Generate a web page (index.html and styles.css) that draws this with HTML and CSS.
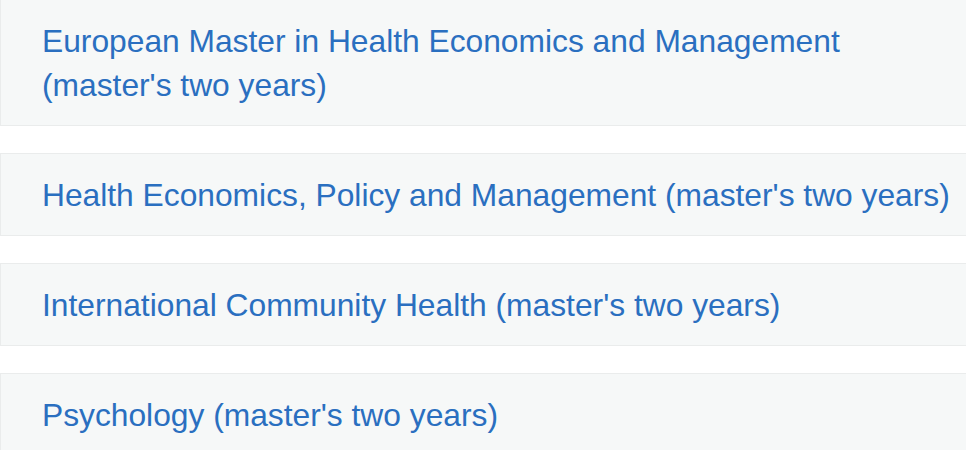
FILE: index.html
```html
<!DOCTYPE html>
<html lang="en">
<head>
<meta charset="utf-8">
<title>Programmes</title>
<link rel="stylesheet" href="styles.css">
</head>
<body>
<ul class="programme-list">
  <li class="programme-card"><a class="programme-link" href="#">European Master in Health Economics and Management (master's two years)</a></li>
  <li class="programme-card"><a class="programme-link" href="#">Health Economics, Policy and Management (master's two years)</a></li>
  <li class="programme-card"><a class="programme-link" href="#">International Community Health (master's two years)</a></li>
  <li class="programme-card"><a class="programme-link" href="#">Psychology (master's two years)</a></li>
</ul>
</body>
</html>
```
FILE: styles.css
```css
html, body {
  margin: 0;
  padding: 0;
  background: #ffffff;
  overflow: hidden;
}
.programme-list {
  list-style: none;
  margin: -1px 0 0 0;
  padding: 0;
  display: flex;
  flex-direction: column;
  gap: 27px;
}
.programme-card {
  background: #f6f8f8;
  border: 1px solid #eaecec;
  border-right: 0;
  padding: 19px 8px 18px 41px;
  font-family: "Liberation Sans", Arial, sans-serif;
  font-size: 31.75px;
  line-height: 44px;
}
.programme-link {
  color: #2a6fc0;
  text-decoration: none;
}
```
